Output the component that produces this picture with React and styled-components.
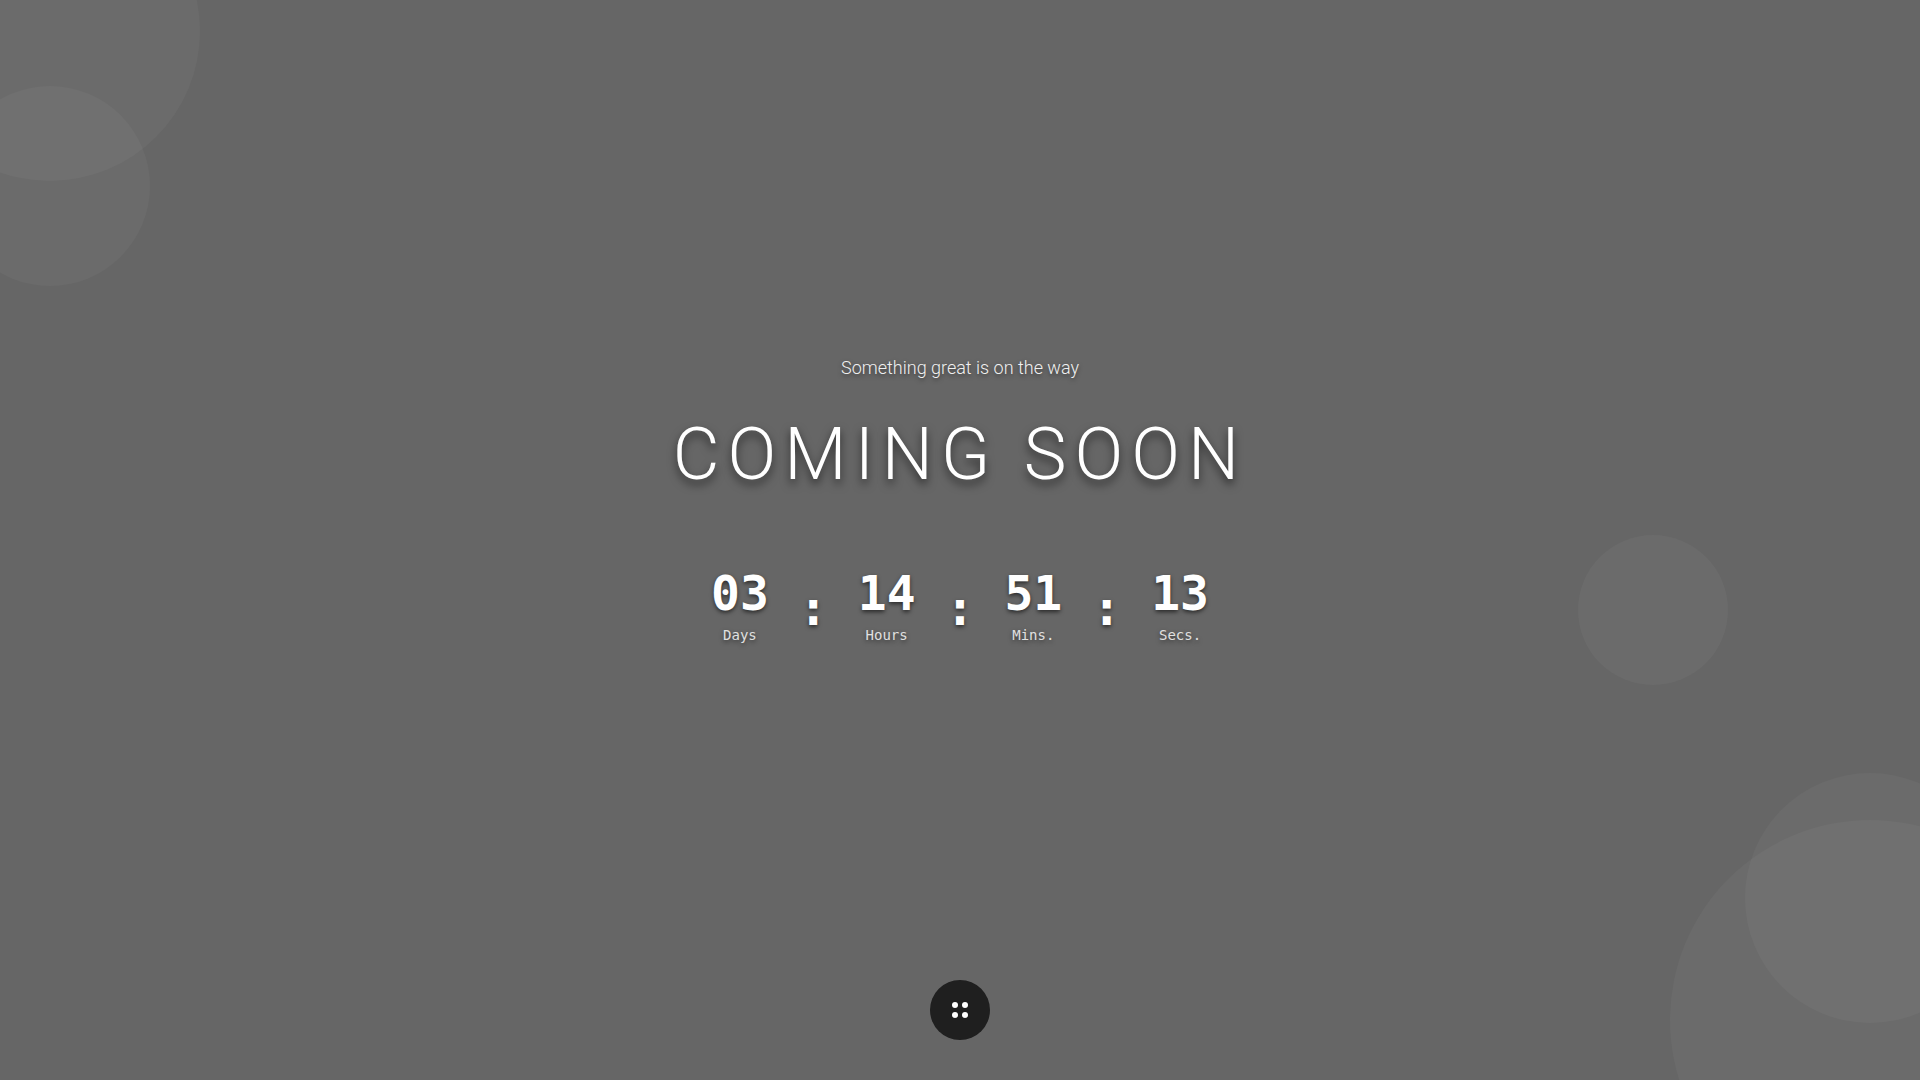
import { Fragment } from "react";
import styled, { createGlobalStyle } from "styled-components";

const circles = [
    { size: 300, top: '-119px', left: '-100px' },
    { size: 200, top: '86px', left: '-50px' },
    { size: 150, top: '535px', right: '10%' },
    { size: 250, bottom: '57px', right: '-75px' },
    { size: 400, bottom: '-140px', right: '-150px' },
];

const units = [
    { label: 'Days', value: '03' },
    { label: 'Hours', value: '14' },
    { label: 'Mins.', value: '51' },
    { label: 'Secs.', value: '13' },
];

//Countdown row
const Countdown = () => {
    return (
        <CountdownWrapper role="timer">
            {units.map((unit, i) => (
                <Fragment key={unit.label}>
                    {i > 0 && <Separator>:</Separator>}
                    <Unit>
                        <UnitValue>{unit.value}</UnitValue>
                        <UnitLabel>{unit.label}</UnitLabel>
                    </Unit>
                </Fragment>
            ))}
        </CountdownWrapper>
    )
}

const App = () => {
    return (
        <>
            <GlobalStyle />
            <Page>
                {circles.map((circle) => (
                    <Circle
                        key={circle.size}
                        $size={circle.size}
                        $top={circle.top}
                        $right={circle.right}
                        $bottom={circle.bottom}
                        $left={circle.left}
                    />
                ))}
                <Content>
                    <Subtitle>Something great is on the way</Subtitle>
                    <Title>COMING SOON</Title>
                    <Countdown />
                </Content>
                <MenuButton type="button" aria-label="Open menu">
                    <Dot />
                    <Dot />
                    <Dot />
                    <Dot />
                </MenuButton>
            </Page>
        </>
    )
}

export default App;

const GlobalStyle = createGlobalStyle`
    * {
        box-sizing: border-box;
    }
    body {
        margin: 0;
        background-color: #666666;
        color: #ffffff;
        font-family: Roboto, sans-serif;
    }
`

const Page = styled.div`
    position: relative;
    display: flex;
    flex-direction: column;
    align-items: center;
    min-height: 100vh;
    padding-bottom: 40px;
    overflow: hidden;
`

const Circle = styled.div`
    position: absolute;
    top: ${props => props.$top ?? 'auto'};
    right: ${props => props.$right ?? 'auto'};
    bottom: ${props => props.$bottom ?? 'auto'};
    left: ${props => props.$left ?? 'auto'};
    width: ${props => props.$size}px;
    height: ${props => props.$size}px;
    border-radius: 50%;
    background-color: rgba(255, 255, 255, 0.035);
`

const Content = styled.main`
    display: flex;
    flex: 1;
    flex-direction: column;
    align-items: center;
    justify-content: center;
    padding-top: 25px;
    text-align: center;
`

const Subtitle = styled.p`
    margin: 0 0 32px;
    font-size: 18px;
    font-weight: 300;
    line-height: 25px;
    opacity: 0.9;
    text-shadow: 0 2px 4px rgba(0, 0, 0, 0.5);
`

const Title = styled.h1`
    margin: 0 0 67px;
    font-size: 72px;
    font-weight: 300;
    line-height: 86px;
    letter-spacing: 8px;
    text-shadow: 0 5px 10px rgba(0, 0, 0, 0.6);
`

const CountdownWrapper = styled.div`
    display: flex;
    align-items: center;
    gap: 30px;
    font-family: "DejaVu Sans Mono", monospace;
    text-shadow: 0 2px 4px rgba(0, 0, 0, 0.6);
`

const Unit = styled.div`
    display: flex;
    flex-direction: column;
    align-items: center;
    padding-bottom: 2px;
`

const UnitValue = styled.span`
    font-size: 48px;
    font-weight: 700;
    line-height: 56px;
`

const UnitLabel = styled.span`
    font-size: 14px;
    line-height: 28px;
    opacity: 0.8;
`

const Separator = styled.span`
    font-size: 48px;
    font-weight: 700;
    line-height: 56px;
`

const MenuButton = styled.button`
    display: grid;
    grid-template-columns: repeat(2, 6px);
    gap: 4px;
    place-content: center;
    width: 60px;
    height: 60px;
    padding: 0;
    border: none;
    border-radius: 50%;
    background-color: #1f1f1f;
    cursor: pointer;
`

const Dot = styled.span`
    width: 6px;
    height: 6px;
    border-radius: 50%;
    background-color: #ffffff;
`
